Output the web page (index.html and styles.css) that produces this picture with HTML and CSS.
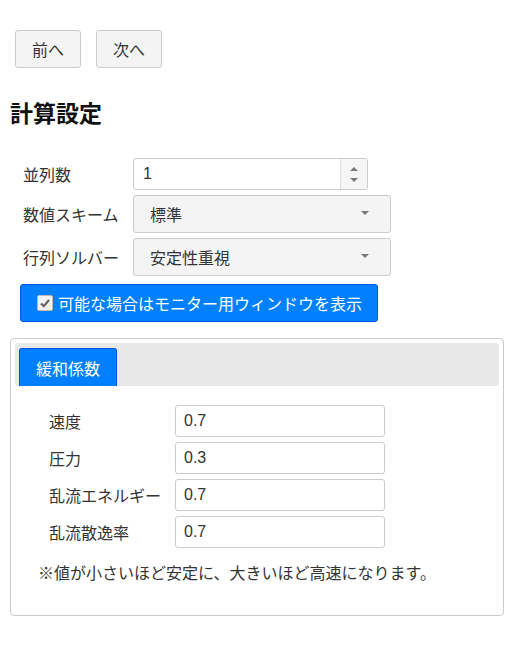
FILE: index.html
```html
<!DOCTYPE html>
<html lang="ja">

<head>
    <meta charset="UTF-8">
    <title>計算設定</title>
    <link rel="stylesheet" href="styles.css">
</head>

<body>
    <div class="nav">
        <button class="btn">前へ</button>
        <button class="btn">次へ</button>
    </div>

    <h2>計算設定</h2>

    <div class="form">
        <div class="row">
            <label>並列数</label>
            <div class="spin-input">
                <span class="value">1</span>
                <span class="spinner">
                    <span class="up"></span>
                    <span class="down"></span>
                </span>
            </div>
        </div>
        <div class="row">
            <label>数値スキーム</label>
            <div class="select">標準<span class="caret"></span></div>
        </div>
        <div class="row">
            <label>行列ソルバー</label>
            <div class="select">安定性重視<span class="caret"></span></div>
        </div>
        <div class="check-btn">
            <span class="checkbox">
                <svg width="12" height="12" viewBox="0 0 12 12">
                    <path d="M2 6.5 L4.8 9.2 L10 3" fill="none" stroke="#666" stroke-width="2.2" />
                </svg>
            </span>
            可能な場合はモニター用ウィンドウを表示
        </div>
    </div>

    <div class="panel">
        <div class="tabs">
            <div class="tab">緩和係数</div>
        </div>
        <div class="panel-body">
            <div class="row">
                <label>速度</label>
                <div class="text-input">0.7</div>
            </div>
            <div class="row">
                <label>圧力</label>
                <div class="text-input">0.3</div>
            </div>
            <div class="row">
                <label>乱流エネルギー</label>
                <div class="text-input">0.7</div>
            </div>
            <div class="row">
                <label>乱流散逸率</label>
                <div class="text-input">0.7</div>
            </div>
            <p class="note">※値が小さいほど安定に、大きいほど高速になります。</p>
        </div>
    </div>
</body>

</html>
```

FILE: styles.css
```css
* {
    margin: 0;
    padding: 0;
    box-sizing: border-box;
}

body {
    font-family: 'Liberation Sans', 'Noto Sans CJK JP', sans-serif;
    font-size: 16px;
    color: #333;
    background: white;
    padding: 30px 10px 0 10px;
}

.nav {
    display: flex;
    gap: 15px;
    padding-left: 5px;
}

.btn {
    font-family: inherit;
    font-size: 16px;
    color: #333;
    height: 38px;
    padding: 0 16px;
    background-color: #f4f4f4;
    border: 1px solid #ccc;
    border-radius: 3px;
}

h2 {
    font-size: 23px;
    font-weight: bold;
    color: #111;
    margin-top: 30px;
    line-height: 32px;
}

.form {
    padding: 28px 0 0 10px;
}

.row {
    display: flex;
    align-items: center;
    margin-bottom: 5px;
}

.row label {
    width: 113px;
    padding-left: 3px;
}

.spin-input {
    width: 235px;
    height: 32px;
    border: 1px solid #ccc;
    border-radius: 3px;
    display: flex;
    align-items: center;
}

.spin-input .value {
    flex: 1;
    padding-left: 9px;
}

.spinner {
    width: 27px;
    height: 100%;
    border-left: 1px solid #ddd;
    background: #f6f6f6;
    border-radius: 0 3px 3px 0;
    display: flex;
    flex-direction: column;
    align-items: center;
    justify-content: center;
    gap: 7px;
}

.spinner .up {
    border-left: 4px solid transparent;
    border-right: 4px solid transparent;
    border-bottom: 4px solid #777;
}

.spinner .down {
    border-left: 4px solid transparent;
    border-right: 4px solid transparent;
    border-top: 4px solid #777;
}

.select {
    width: 258px;
    height: 38px;
    background: #f4f4f4;
    border: 1px solid #ccc;
    border-radius: 3px;
    display: flex;
    align-items: center;
    padding-left: 16px;
    position: relative;
}

.caret {
    position: absolute;
    right: 21px;
    top: 15px;
    border-left: 4px solid transparent;
    border-right: 4px solid transparent;
    border-top: 4px solid #777;
}

.check-btn {
    margin-top: 8px;
    width: 358px;
    height: 38px;
    background: #0080ff;
    border: 1px solid #0055e5;
    border-radius: 3px;
    color: white;
    display: flex;
    align-items: center;
    padding-left: 16px;
    gap: 5px;
}

.checkbox {
    width: 16px;
    height: 16px;
    background: #f2f2f2;
    border: 1px solid #bbb;
    border-radius: 2px;
    display: flex;
    align-items: center;
    justify-content: center;
}

.panel {
    margin-top: 16px;
    width: 494px;
    border: 1px solid #ccc;
    border-radius: 4px;
    padding: 4px;
    height: 278px;
}

.tabs {
    background: #e8e8e8;
    border-radius: 3px;
    padding: 5px 4px 0 4px;
    height: 43px;
    display: flex;
    align-items: flex-end;
}

.tab {
    width: 98px;
    height: 38px;
    background: #0080ff;
    border: 1px solid #0055e5;
    border-bottom: none;
    border-radius: 3px 3px 0 0;
    color: white;
    display: flex;
    align-items: center;
    justify-content: center;
}

.panel-body {
    padding: 19px 0 0 34px;
}

.panel-body label {
    width: 126px;
    padding-left: 0;
}

.text-input {
    width: 210px;
    height: 32px;
    border: 1px solid #ccc;
    border-radius: 3px;
    padding-left: 8px;
    display: flex;
    align-items: center;
}

.note {
    margin-top: 14px;
    margin-left: -11px;
    line-height: 24px;
}
```
